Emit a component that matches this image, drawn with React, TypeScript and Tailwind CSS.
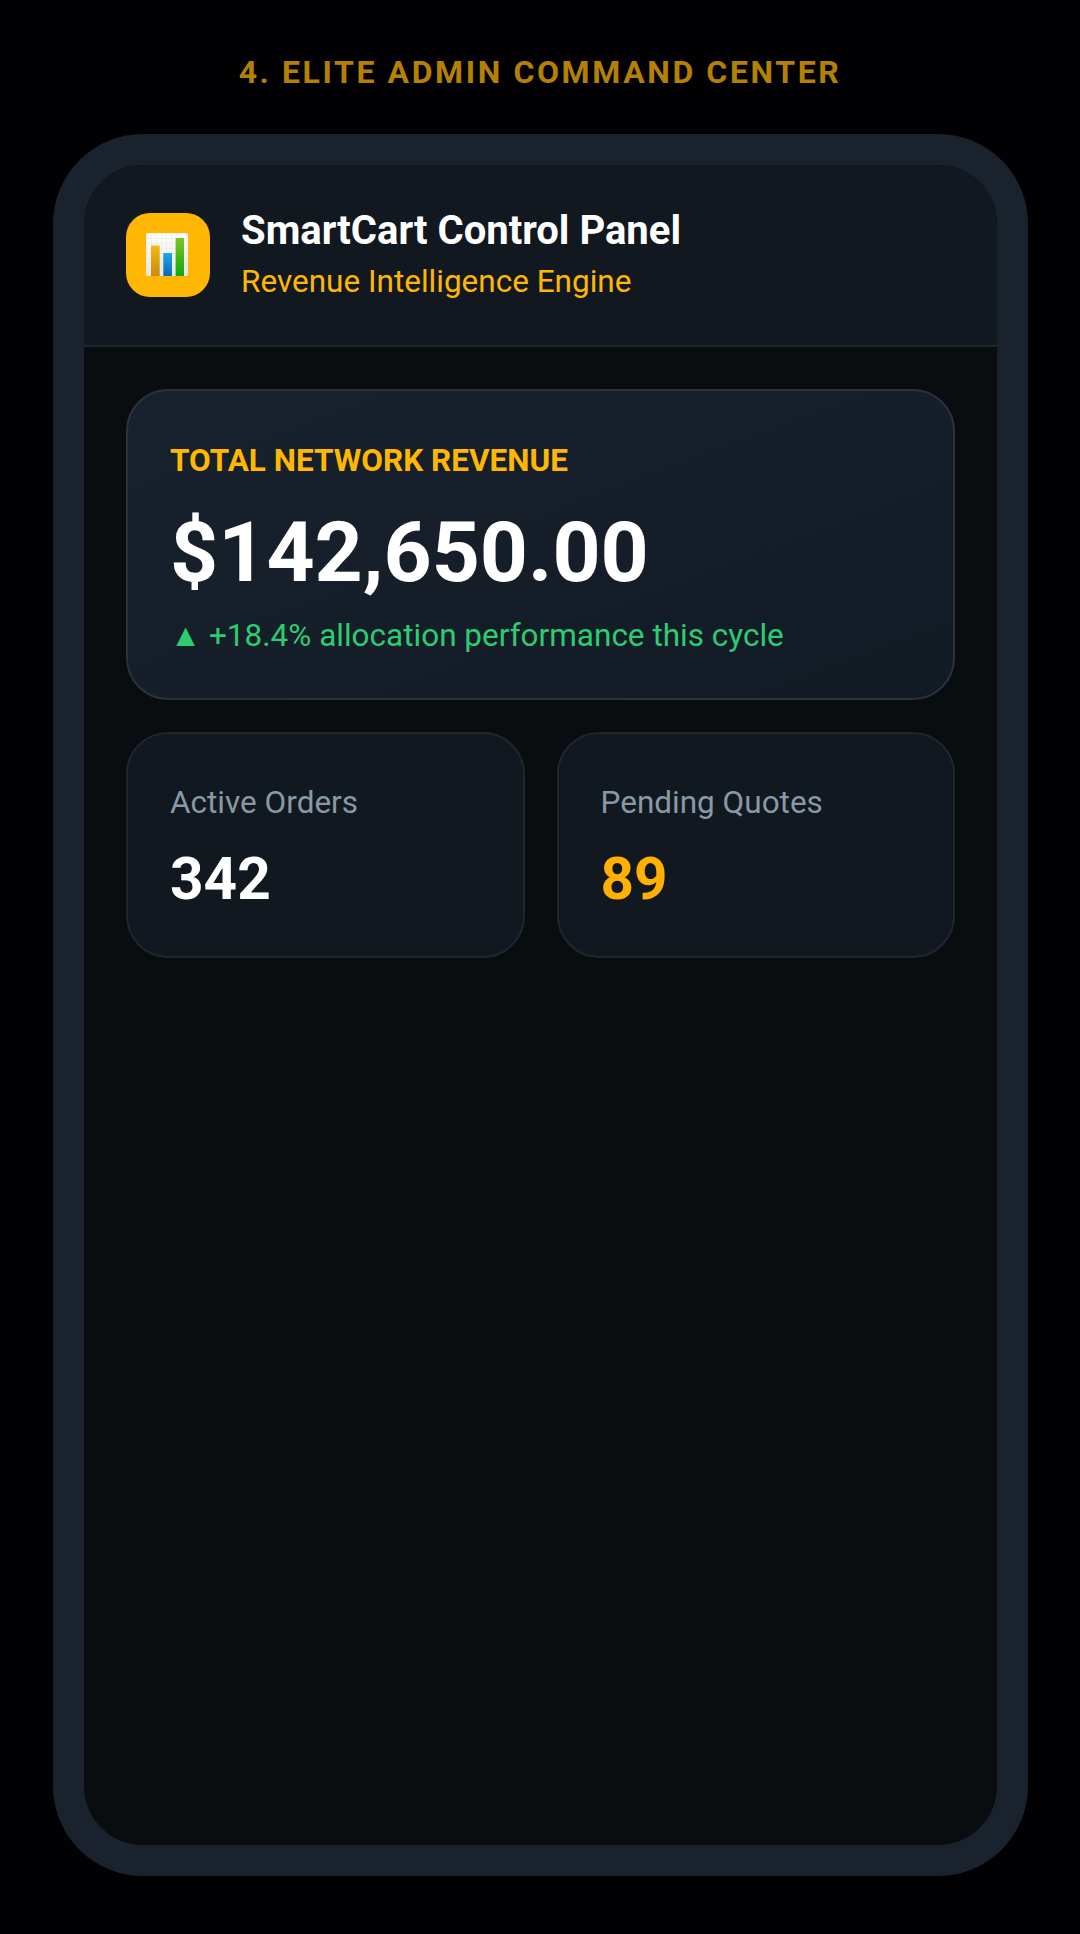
export default function App() {
  return (
    <div className="w-[1080px] h-[1934px] bg-[#010103] flex flex-col items-center overflow-hidden font-['Roboto',sans-serif]">
      <h1 className="mt-[52px] h-[40px] leading-[40px] text-[32px] font-bold tracking-[2.6px] text-[#b58105]">4. ELITE ADMIN COMMAND CENTER</h1>
      <div className="mt-[42px] ml-[1px] w-[975px] h-[1742px] rounded-[90px] border-[31px] border-[#1a232d] bg-[#0a0d10] overflow-hidden flex flex-col">
        <header className="h-[182px] shrink-0 bg-[#12181f] border-b-2 border-[#20262e] flex items-center gap-[31px] pl-[42px]">
          <div className="w-[84px] h-[84px] rounded-[24px] bg-[#ffb703] flex items-center justify-center">
            <svg width="42" height="44" viewBox="0 0 42 44" className="-ml-[2px] -mt-[1px]">
              <defs>
                <linearGradient id="a" x1="0" y1="0" x2="0" y2="1"><stop offset="0" stopColor="#f6b90f" /><stop offset="1" stopColor="#c98a0a" /></linearGradient>
                <linearGradient id="b" x1="0" y1="0" x2="0" y2="1"><stop offset="0" stopColor="#1ca5ee" /><stop offset="1" stopColor="#0a6cb0" /></linearGradient>
                <linearGradient id="c" x1="0" y1="0" x2="0" y2="1"><stop offset="0" stopColor="#7cc624" /><stop offset="1" stopColor="#10a80e" /></linearGradient>
                <linearGradient id="p" x1="0" y1="0" x2="0" y2="1"><stop offset="0" stopColor="#ffffff" /><stop offset="1" stopColor="#e6e6e6" /></linearGradient>
                <pattern id="g" width="5" height="5" patternUnits="userSpaceOnUse"><path d="M5 0H0V5" fill="none" stroke="#dcdcdc" strokeWidth="0.6" /></pattern>
              </defs>
              <rect width="42" height="43" rx="2" fill="url(#p)" />
              <rect width="42" height="43" rx="2" fill="url(#g)" />
              <rect x="5" y="12.5" width="8.7" height="30.5" fill="url(#a)" />
              <rect x="17.3" y="20" width="8.7" height="23" fill="url(#b)" />
              <rect x="29.6" y="5" width="8.4" height="38" fill="url(#c)" />
            </svg>
          </div>
          <div className="flex flex-col">
            <div className="text-[40px] leading-[48px] font-bold text-white -mt-[3px]">SmartCart Control Panel</div>
            <div className="text-[31.5px] leading-[38px] mt-[8px] text-[#ffb703]">Revenue Intelligence Engine</div>
          </div>
        </header>
        <main className="px-[42px] pt-[42px] flex flex-col gap-[32px]">
          <section className="h-[311px] rounded-[42px] border-2 border-[#29323d] bg-gradient-to-br from-[#18222e] to-[#121a24] px-[42px] pt-[52px]">
            <div className="text-[31.5px] leading-[36px] font-bold text-[#ffb703]">TOTAL NETWORK REVENUE</div>
            <div className="text-[84px] leading-[96px] mt-[26px] font-bold text-white">$142,650.00</div>
            <div className="text-[31.5px] leading-[38px] mt-[16px] text-[#2ecc71]">▲ +18.4% allocation performance this cycle</div>
          </section>
          <div className="grid grid-cols-2 gap-[32px]">
            <Stat label="Active Orders" value="342" color="text-white" />
            <Stat label="Pending Quotes" value="89" color="text-[#ffb000]" />
          </div>
        </main>
      </div>
    </div>
  );
}

function Stat({ label, value, color }: { label: string; value: string; color: string }) {
  return (
    <div className="h-[226px] rounded-[42px] border-2 border-[#20262e] bg-[#12181f] px-[42px] pt-[51px]">
      <div className="text-[31.5px] leading-[36px] text-[#8899a6]">{label}</div>
      <div className={`text-[58.5px] leading-[70px] mt-[23px] font-bold ${color}`}>{value}</div>
    </div>
  );
}
